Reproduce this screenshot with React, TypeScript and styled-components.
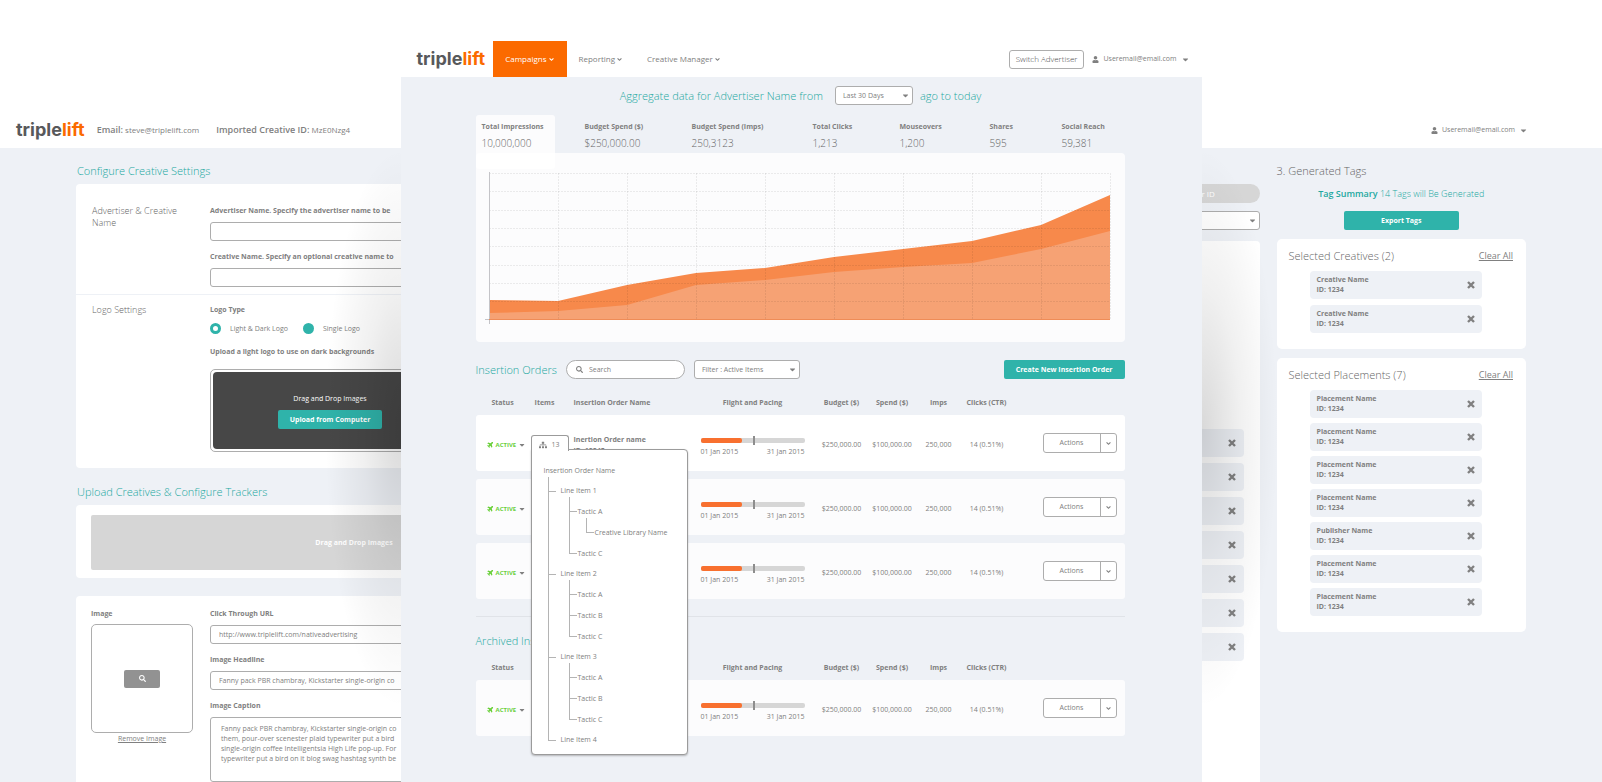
import React from "react";
import styled, { createGlobalStyle, css } from "styled-components";
import { FaAngleDown, FaCaretDown, FaPlane, FaSearch, FaSitemap, FaUser } from "react-icons/fa";

const color = {
  page: "#eef1f6",
  text: "#808080",
  soft: "#666",
  line: "#adadad",
  teal: "#2fb3aa",
  heading: "#22a89f",
  orange: "#fb6a00",
  green: "#6bd03c",
  grey: "#d6d6d6",
};

const GlobalStyle = createGlobalStyle`
  *, *::before, *::after { box-sizing: border-box; }
  body {
    margin: 0;
    background: ${color.page};
    color: ${color.text};
    font: 400 7px/10px "Open Sans", "Noto Sans", sans-serif;
  }
  button, input, select, textarea { font: inherit; color: inherit; margin: 0; }
  button { cursor: pointer; }
  h1, h2, h3, p, ul { margin: 0; padding: 0; }
  ul { list-style: none; }
  a { color: inherit; }
  svg { display: block; flex: none; }
`;

/* ---------- shared pieces ---------- */

const Stage = styled.div`
  display: grid;
  grid-template-columns: minmax(0, 1fr) minmax(0, 2fr) minmax(0, 1fr);
  height: 100vh;
  overflow: hidden;
`;

const Screen = styled.section<{ $shade?: "left" | "right" }>`
  position: relative;
  overflow: hidden;
  background: ${color.page};
  ${({ $shade }) =>
    $shade &&
    css`
      &::after {
        content: "";
        position: absolute;
        top: 148px;
        bottom: 0;
        ${$shade}: 0;
        width: 80px;
        pointer-events: none;
        background: radial-gradient(
          ellipse 76px 280px at ${$shade === "right" ? "100%" : "0%"} 280px,
          rgba(0, 0, 0, 0.15),
          rgba(0, 0, 0, 0.06) 50%,
          transparent
        );
      }
    `}
`;

const SideHeader = styled.header`
  display: flex;
  align-items: center;
  height: 148px;
  padding: 112px 16px 0;
  background: #fff;
`;

const LogoLink = styled.a`
  color: #58595b;
  font: 700 18px/22px Inter, "Open Sans", sans-serif;
  text-decoration: none;
  span { color: ${color.orange}; }
`;

const Logo = () => (
  <LogoLink href="#home">
    triple<span>lift</span>
  </LogoLink>
);

const Heading = styled.h2<{ $grey?: boolean }>`
  color: ${({ $grey }) => ($grey ? color.soft : color.heading)};
  font-size: 11px;
  font-weight: 300;
  line-height: 19px;
  white-space: nowrap;
`;

const PrimaryButton = styled.button`
  height: 19px;
  padding: 0 12px;
  border: 0;
  border-radius: 2px;
  background: ${color.teal};
  color: #fff;
  font-weight: 700;
  white-space: nowrap;
`;

const OutlineButton = styled.button`
  height: 19px;
  padding: 0 6px;
  border: 1px solid ${color.line};
  border-radius: 3px;
  background: #fff;
  font-size: 8px;
  font-weight: 300;
  color: #4c4c4c;
`;

const UserButton = styled.button`
  display: flex;
  align-items: center;
  gap: 4px;
  padding: 0;
  border: 0;
  background: none;
`;

const UserMenu = () => (
  <UserButton>
    <FaUser size={7} />
    Useremail@email.com
    <FaCaretDown size={9} />
  </UserButton>
);

const SelectBox = styled.span`
  position: relative;
  display: block;
  svg { position: absolute; right: 3px; top: 5px; pointer-events: none; }
`;

const SelectField = styled.select`
  display: block;
  width: 100%;
  height: 19px;
  padding: 0 20px 0 7px;
  border: 1px solid ${color.line};
  border-radius: 3px;
  background: #fff;
  appearance: none;
`;

const Select = ({ label, value, className }: { label: string; value: string; className?: string }) => (
  <SelectBox className={className}>
    <SelectField aria-label={label}>
      <option>{value}</option>
    </SelectField>
    <FaCaretDown size={9} />
  </SelectBox>
);

/* ---------- creative settings screen ---------- */

const HeaderFact = styled.p`
  margin-left: 12px;
  font-size: 8px;
  white-space: nowrap;
  & + & { margin-left: 17px; }
  b { font-size: 9px; font-weight: 600; }
`;

const SettingsBody = styled.div`
  width: 632px;
  padding: 13px 0 0 76px;
  ${Heading} { padding-left: 1px; }
`;

const SettingsCard = styled.div<{ $bottom: number }>`
  margin: 4px 0 ${({ $bottom }) => $bottom}px;
  border-radius: 4px;
  background: #fff;
`;

const SettingsGroup = styled.div<{ $top: number; $bottom: number }>`
  display: grid;
  grid-template-columns: 119px 1fr;
  padding: ${({ $top, $bottom }) => `${$top}px 15px ${$bottom}px`};
  & + & { border-top: 1px solid ${color.page}; }
`;

const GroupTitle = styled.h3`
  width: 96px;
  padding-left: 1px;
  font-size: 9px;
  font-weight: 300;
  line-height: 12px;
  color: ${color.soft};
`;

const Fields = styled.div`
  display: flex;
  flex-direction: column;
  gap: 10px;
`;

const Field = styled.label`
  display: flex;
  flex-direction: column;
  gap: 6px;
  font-weight: 700;
  line-height: 11px;
  white-space: nowrap;
`;

const inputLook = css`
  width: 100%;
  border: 1px solid ${color.line};
  border-radius: 3px;
  background: #fff;
  font-weight: 400;
`;

const TextInput = styled.input`
  ${inputLook}
  height: 19px;
  padding: 0 8px;
`;

const TextArea = styled.textarea`
  ${inputLook}
  height: 65px;
  padding: 6px 10px;
  line-height: 10px;
  resize: none;
`;

const LogoOptions = styled.div`
  font-weight: 700;
  line-height: 11px;
`;

const RadioRow = styled.div`
  display: flex;
  gap: 15px;
  margin: 8px 0 12px;
  label {
    display: flex;
    align-items: center;
    gap: 9px;
    font-weight: 400;
  }
`;

const Radio = styled.input`
  width: 11px;
  height: 11px;
  margin: 0;
  border-radius: 50%;
  background: ${color.teal};
  appearance: none;
  &:checked { border: 3px solid ${color.teal}; background: #fff; }
`;

const LogoDrop = styled.div`
  width: 240px;
  height: 83px;
  margin-top: 12px;
  padding: 2px;
  border: 1px solid ${color.line};
  border-radius: 5px;
`;

const LogoDropArea = styled.div`
  display: flex;
  flex-direction: column;
  align-items: center;
  justify-content: center;
  gap: 6px;
  height: 100%;
  border-radius: 4px;
  background: #474747;
  color: #fff;
  font-weight: 400;
`;

const DropStrip = styled.div`
  display: flex;
  align-items: center;
  justify-content: center;
  height: 55px;
  border-radius: 2px;
  background: ${color.grey};
  color: #fff;
  font-weight: 700;
`;

const StripWrap = styled.div`
  padding: 10px 15px 8px;
`;

const ImageColumn = styled.div`
  width: 102px;
  font-weight: 700;
  line-height: 11px;
  a {
    display: block;
    font-weight: 400;
    text-align: center;
  }
`;

const Thumbnail = styled.div`
  display: grid;
  place-items: center;
  height: 109px;
  margin-top: 5px;
  border: 1px solid ${color.line};
  border-radius: 5px;
`;

const ThumbButton = styled.button`
  display: grid;
  place-items: center;
  width: 36px;
  height: 18px;
  padding: 0;
  border: 0;
  border-radius: 2px;
  background: #929292;
  color: #fff;
`;

const caption = `Fanny pack PBR chambray, Kickstarter single-origin co
them, pour-over scenester plaid typewriter put a bird
single-origin coffee Intelligentsia High Life pop-up. For
typewriter put a bird on it blog swag hashtag synth be`;

const SettingsScreen = () => (
  <Screen $shade="right">
    <SideHeader>
      <Logo />
      <HeaderFact>
        <b>Email:</b> steve@triplelift.com
      </HeaderFact>
      <HeaderFact>
        <b>Imported Creative ID:</b> MzE0Nzg4
      </HeaderFact>
    </SideHeader>
    <SettingsBody>
      <Heading>Configure Creative Settings</Heading>
      <SettingsCard $bottom={14}>
        <SettingsGroup $top={21} $bottom={7}>
          <GroupTitle>Advertiser &amp; Creative Name</GroupTitle>
          <Fields>
            <Field>
              Advertiser Name. Specify the advertiser name to be
              <TextInput />
            </Field>
            <Field>
              Creative Name. Specify an optional creative name to
              <TextInput />
            </Field>
          </Fields>
        </SettingsGroup>
        <SettingsGroup $top={9} $bottom={16}>
          <GroupTitle>Logo Settings</GroupTitle>
          <LogoOptions>
            Logo Type
            <RadioRow>
              <label>
                <Radio type="radio" name="logo" defaultChecked />
                Light &amp; Dark Logo
              </label>
              <label>
                <Radio type="radio" name="logo" />
                Single Logo
              </label>
            </RadioRow>
            Upload a light logo to use on dark backgrounds
            <LogoDrop>
              <LogoDropArea>
                Drag and Drop Images
                <PrimaryButton>Upload from Computer</PrimaryButton>
              </LogoDropArea>
            </LogoDrop>
          </LogoOptions>
        </SettingsGroup>
      </SettingsCard>
      <Heading>Upload Creatives &amp; Configure Trackers</Heading>
      <SettingsCard $bottom={18}>
        <StripWrap>
          <DropStrip>Drag and Drop Images</DropStrip>
        </StripWrap>
      </SettingsCard>
      <SettingsCard $bottom={0}>
        <SettingsGroup $top={12} $bottom={16}>
          <ImageColumn>
            Image
            <Thumbnail>
              <ThumbButton aria-label="Preview image">
                <FaSearch size={7} />
              </ThumbButton>
            </Thumbnail>
            <a href="#remove">Remove Image</a>
          </ImageColumn>
          <Fields>
            <Field>
              Click Through URL
              <TextInput defaultValue="http://www.triplelift.com/nativeadvertising" />
            </Field>
            <Field>
              Image Headline
              <TextInput defaultValue="Fanny pack PBR chambray, Kickstarter single-origin co" />
            </Field>
            <Field>
              Image Caption
              <TextArea defaultValue={caption} />
            </Field>
          </Fields>
        </SettingsGroup>
      </SettingsCard>
    </SettingsBody>
  </Screen>
);

/* ---------- campaigns screen ---------- */

const CampaignHeader = styled.header`
  display: flex;
  align-items: center;
  gap: 8px;
  height: 77px;
  padding: 41px 12px 0 16px;
  background: #fff;
`;

const Nav = styled.nav`
  display: flex;
  align-self: stretch;
  flex: 1;
`;

const NavLink = styled.a<{ $active?: boolean }>`
  display: flex;
  align-items: center;
  gap: 1px;
  padding: 0 12px;
  background: ${({ $active }) => ($active ? color.orange : "transparent")};
  color: ${({ $active }) => ($active ? "#fff" : color.text)};
  font-size: 8px;
  text-decoration: none;
  white-space: nowrap;
`;

const CampaignBody = styled.div`
  padding: 9px 77px 0 75px;
`;

const RangeRow = styled.div`
  display: flex;
  justify-content: center;
  gap: 7px;
  padding-left: 1px;
`;

const RangeSelect = styled(Select)`
  width: 78px;
  margin-left: 5px;
`;

const Stats = styled.div`
  position: relative;
  z-index: 1;
  display: grid;
  grid-template-columns:
    minmax(0, 103fr) minmax(0, 107fr) minmax(0, 121fr) minmax(0, 87fr)
    minmax(0, 90fr) minmax(0, 72fr) minmax(0, 69fr);
  align-items: start;
  height: 38px;
  margin-top: 10px;
`;

const Stat = styled.button<{ $active?: boolean }>`
  display: flex;
  flex-direction: column;
  gap: 4px;
  width: 79px;
  height: 54px;
  padding: 7px 6px 0;
  border: 0;
  border-radius: 3px;
  background: ${({ $active }) => ($active ? "rgba(255, 255, 255, 0.8)" : "transparent")};
  text-align: left;
  white-space: nowrap;
  b { line-height: 10px; }
  span { font-size: 10px; font-weight: 300; line-height: 14px; color: ${color.soft}; }
`;

const ChartCard = styled.div`
  height: 189px;
  border-radius: 4px;
  background: rgba(255, 255, 255, 0.8);
  svg { width: 100%; height: 100%; }
`;

const stats: [string, string][] = [
  ["Total Impressions", "10,000,000"],
  ["Budget Spend ($)", "$250,000.00"],
  ["Budget Spend (Imps)", "250,3123"],
  ["Total Clicks", "1,213"],
  ["Mouseovers", "1,200"],
  ["Shares", "595"],
  ["Social Reach", "59,381"],
];

const totalSeries = [147, 148, 132, 120, 115, 104, 96, 88, 72, 42];
const spentSeries = [160, 158, 152, 132, 127, 119, 114, 110, 96, 78];
const gridRows = [20, 38, 57, 75, 93, 112, 130, 148];
const chartX = (i: number) => 13 + i * 69;
const area = (ys: number[]) =>
  `M13 167 ${ys.map((y, i) => `L${chartX(i)} ${y}`).join(" ")} L${chartX(9)} 167Z`;

const Chart = () => (
  <svg viewBox="0 0 649 189" preserveAspectRatio="none" role="img" aria-label="Impressions over time">
    <path d={area(totalSeries)} fill="#f7894b" />
    <path d={area(spentSeries)} fill="#f6a274" />
    <g stroke="#000" strokeOpacity="0.07" strokeDasharray="2 1" shapeRendering="crispEdges">
      {gridRows.map((y) => (
        <line key={y} x1="13" x2="634" y1={y + 0.5} y2={y + 0.5} />
      ))}
      {totalSeries.map((_, i) => (
        <line key={i} x1={chartX(i) + 0.5} x2={chartX(i) + 0.5} y1="20" y2="167" />
      ))}
    </g>
    <path d="M13.5 19V171M9 166.5H13" stroke="#c4c4c8" fill="none" />
    <path d="M13 166.5H634" stroke="#ef8c57" fill="none" />
  </svg>
);

const Toolbar = styled.div`
  display: flex;
  align-items: center;
  gap: 9px;
  margin: 18px 0 12px;
  ${PrimaryButton} { margin-left: auto; }
`;

const SearchBox = styled.label`
  display: flex;
  align-items: center;
  gap: 6px;
  width: 119px;
  height: 19px;
  padding: 0 9px;
  border: 1px solid ${color.line};
  border-radius: 10px;
  background: #fff;
  input {
    flex: 1;
    min-width: 0;
    padding: 0;
    border: 0;
    outline: 0;
    background: none;
  }
  input::placeholder { color: inherit; opacity: 1; }
`;

const FilterSelect = styled(Select)`
  width: 106px;
`;

const OrderTable = styled.table`
  width: 100%;
  border-spacing: 0 8px;
  table-layout: fixed;
  white-space: nowrap;
  th { padding: 0; line-height: 8px; text-align: center; }
  td {
    height: 56px;
    padding: 3px 0 0;
    background: rgba(255, 255, 255, 0.8);
    text-align: center;
  }
  td:first-child { padding-left: 11px; border-radius: 3px 0 0 3px; }
  td:last-child { padding: 0 8px 0 0; border-radius: 0 3px 3px 0; }
  .name { padding-left: 14px; text-align: left; }
  td.name { line-height: 11px; }
  td.flight { padding-top: 6px; }
  .budget { padding-left: 12px; }
  tr.current td { background: #fff; }
`;

const Col = styled.col<{ $w?: number }>`
  width: ${({ $w }) => ($w ? `${$w}px` : "auto")};
`;

const StatusButton = styled.button`
  display: flex;
  align-items: center;
  gap: 2px;
  padding: 0;
  border: 0;
  background: none;
  color: ${color.green};
  font-size: 6px;
  font-weight: 700;
  svg:first-child { transform: rotate(-45deg); }
  svg:last-child { color: ${color.text}; }
`;

const Pacing = styled.div`
  position: relative;
  height: 5px;
  margin: 2px 0;
  border-radius: 2px;
  background: ${color.grey};
  &::before {
    content: "";
    display: block;
    width: 40%;
    height: 100%;
    border-radius: 2px;
    background: #f8702f;
  }
  &::after {
    content: "";
    position: absolute;
    left: 50%;
    top: -2px;
    width: 2px;
    height: 9px;
    background: #8d8d8d;
  }
`;

const Dates = styled.div`
  display: flex;
  justify-content: space-between;
  margin-top: 4px;
`;

const ActionGroup = styled.div`
  display: flex;
  width: 74px;
  margin-left: auto;
  border: 1px solid ${color.line};
  border-radius: 3px;
  background: #fff;
`;

const ActionButton = styled.button`
  display: grid;
  place-items: center;
  flex: 1;
  height: 18px;
  padding: 0;
  border: 0;
  background: none;
  & + & {
    flex: 0 0 16px;
    border-left: 1px solid ${color.line};
  }
`;

const Divider = styled.hr`
  margin: 9px 0 14px;
  border: 0;
  border-top: 1px solid #e0e3e8;
`;

const ArchivedTable = styled(OrderTable)`
  margin-top: 6px;
`;

const ItemsCell = styled.td`
  position: relative;
`;

const ItemsMenu = styled.div`
  position: absolute;
  z-index: 2;
  top: 20px;
  left: 1px;
  text-align: left;
`;

const ItemsTab = styled.button`
  position: relative;
  z-index: 1;
  display: flex;
  align-items: center;
  justify-content: center;
  gap: 4px;
  width: 38px;
  height: 16px;
  margin-bottom: -2px;
  padding: 2px 0 0;
  border: 1px solid #9b9b9b;
  border-bottom: 0;
  border-radius: 3px 3px 0 0;
  background: #fff;
`;

const TreePanel = styled.div`
  width: 157px;
  padding: 10px 0 4px 12px;
  border: 1px solid #9b9b9b;
  border-radius: 0 4px 4px 4px;
  background: #fff;
  box-shadow: 0 1px 2px rgba(0, 0, 0, 0.25);
  line-height: 21px;
`;

const Branch = styled.ul<{ $level: number }>`
  margin-left: ${({ $level }) => ($level === 1 ? 4 : 8)}px;
  > li {
    position: relative;
    padding-left: ${({ $level }) => ($level === 1 ? 13 : 9)}px;
  }
  > li > span { display: block; line-height: ${({ $level }) => ($level === 1 ? 20 : 21)}px; }
  > li::before {
    content: "";
    position: absolute;
    left: 0;
    top: -4px;
    width: 8px;
    height: 15px;
    border: solid #b4b4b4;
    border-width: 0 0 1px 1px;
  }
  > li:not(:last-child)::after {
    content: "";
    position: absolute;
    left: 0;
    top: 0;
    bottom: 0;
    border-left: 1px solid #b4b4b4;
  }
`;

type Node = { name: string; children?: Node[] };

const tactics = ["Tactic A", "Tactic B", "Tactic C"].map((name) => ({ name }));
const lineItems: Node[] = [
  {
    name: "Line Item 1",
    children: [{ name: "Tactic A", children: [{ name: "Creative Library Name" }] }, { name: "Tactic C" }],
  },
  { name: "Line Item 2", children: tactics },
  { name: "Line Item 3", children: tactics },
  { name: "Line Item 4" },
];

const Tree = ({ nodes, level }: { nodes: Node[]; level: number }) => (
  <Branch $level={level}>
    {nodes.map((node) => (
      <li key={node.name}>
        <span>{node.name}</span>
        {node.children && <Tree nodes={node.children} level={level + 1} />}
      </li>
    ))}
  </Branch>
);

const Columns = () => (
  <colgroup>
    {[54, 30, undefined, 104, 62, 51, 42, 54, 111].map((w, i) => (
      <Col key={i} $w={w} />
    ))}
  </colgroup>
);

const TableHead = () => (
  <thead>
    <tr>
      <th>Status</th>
      <th>Items</th>
      <th className="name">Insertion Order Name</th>
      <th>Flight and Pacing</th>
      <th className="budget">Budget ($)</th>
      <th>Spend ($)</th>
      <th>Imps</th>
      <th>Clicks (CTR)</th>
      <th aria-label="Actions" />
    </tr>
  </thead>
);

const OrderRow = ({ open }: { open?: boolean }) => (
  <tr className={open ? "current" : undefined}>
    <td>
      <StatusButton>
        <FaPlane size={7} />
        ACTIVE
        <FaCaretDown size={8} />
      </StatusButton>
    </td>
    <ItemsCell>
      {open && (
        <ItemsMenu>
          <ItemsTab aria-expanded="true">
            <FaSitemap size={8} />
            13
          </ItemsTab>
          <TreePanel>
            Insertion Order Name
            <Tree nodes={lineItems} level={1} />
          </TreePanel>
        </ItemsMenu>
      )}
    </ItemsCell>
    <td className="name">
      {open && (
        <b>
          Inertion Order name
          <br />
          ID: 12345
        </b>
      )}
    </td>
    <td className="flight">
      <Pacing />
      <Dates>
        <span>01 Jan 2015</span>
        <span>31 Jan 2015</span>
      </Dates>
    </td>
    <td className="budget">$250,000.00</td>
    <td>$100,000.00</td>
    <td>250,000</td>
    <td>14 (0.51%)</td>
    <td>
      <ActionGroup>
        <ActionButton>Actions</ActionButton>
        <ActionButton aria-label="More actions">
          <FaAngleDown size={7} />
        </ActionButton>
      </ActionGroup>
    </td>
  </tr>
);

const CampaignScreen = () => (
  <Screen>
    <CampaignHeader>
      <Logo />
      <Nav>
        {["Campaigns", "Reporting", "Creative Manager"].map((name, i) => (
          <NavLink key={name} href="#nav" $active={i === 0}>
            {name}
            <FaAngleDown size={7} />
          </NavLink>
        ))}
      </Nav>
      <OutlineButton>Switch Advertiser</OutlineButton>
      <UserMenu />
    </CampaignHeader>
    <CampaignBody>
      <RangeRow>
        <Heading>Aggregate data for Advertiser Name from</Heading>
        <RangeSelect label="Date range" value="Last 30 Days" />
        <Heading as="span">ago to today</Heading>
      </RangeRow>
      <Stats>
        {stats.map(([name, value], i) => (
          <Stat key={name} $active={i === 0}>
            <b>{name}</b>
            <span>{value}</span>
          </Stat>
        ))}
      </Stats>
      <ChartCard>
        <Chart />
      </ChartCard>
      <Toolbar>
        <Heading>Insertion Orders</Heading>
        <SearchBox>
          <FaSearch size={7} />
          <input placeholder="Search" aria-label="Search" />
        </SearchBox>
        <FilterSelect label="Filter" value="Filter : Active Items" />
        <PrimaryButton>Create New Insertion Order</PrimaryButton>
      </Toolbar>
      <OrderTable>
        <Columns />
        <TableHead />
        <tbody>
          <OrderRow open />
          <OrderRow />
          <OrderRow />
        </tbody>
      </OrderTable>
      <Divider />
      <Heading>Archived Insertion Orders</Heading>
      <ArchivedTable>
        <Columns />
        <TableHead />
        <tbody>
          <OrderRow />
        </tbody>
      </ArchivedTable>
    </CampaignBody>
  </Screen>
);

/* ---------- tag generation screen ---------- */

const TagHeader = styled(SideHeader)`
  justify-content: flex-end;
  padding-right: 74px;
`;

const TagBody = styled.div`
  display: grid;
  grid-template-columns: 58px minmax(0, 1fr);
  gap: 17px;
  padding: 13px 76px 0 0;
`;

const SourceColumn = styled.div`
  margin-left: -30px;
  padding-top: 23px;
`;

const IdPill = styled.button`
  display: block;
  width: 100%;
  height: 19px;
  padding: 0 0 0 30px;
  border: 0;
  border-radius: 10px;
  background: ${color.grey};
  color: #fff;
  font-size: 8px;
  text-align: left;
  white-space: nowrap;
`;

const SourceSelect = styled(Select)`
  margin: 8px 0 11px;
`;

const SourceList = styled.ul`
  display: flex;
  flex-direction: column;
  gap: 6px;
  height: 560px;
  padding: 188px 16px 0 0;
  border-radius: 4px;
  background: #fff;
`;

const TagItem = styled.li`
  display: flex;
  align-items: center;
  justify-content: space-between;
  height: 28px;
  padding: 0 7px;
  border-radius: 4px;
  background: ${color.page};
  font-weight: 700;
`;

const SourceItem = styled(TagItem)`
  justify-content: flex-end;
  padding-right: 8px;
`;

const RemoveButton = styled.button`
  padding: 0;
  border: 0;
  background: none;
`;

const Remove = () => (
  <RemoveButton aria-label="Remove">
    <svg width="8" height="8" viewBox="0 0 8 8" stroke="currentColor" strokeWidth="2.4">
      <path d="M1 1L7 7M7 1L1 7" />
    </svg>
  </RemoveButton>
);

const Summary = styled.p`
  margin: 9px 0 12px;
  color: ${color.heading};
  font-size: 9px;
  font-weight: 300;
  text-align: center;
  b { font-weight: 600; }
`;

const ExportButton = styled(PrimaryButton)`
  display: block;
  width: 115px;
  margin: 0 auto;
`;

const TagCard = styled.section`
  margin-top: 9px;
  padding: 7px 13px 16px 12px;
  border-radius: 5px;
  background: #fff;
  & + & { margin-top: 9px; }
`;

const TagCardHead = styled.div`
  display: flex;
  align-items: center;
  justify-content: space-between;
  a { font-size: 9px; }
`;

const TagList = styled.ul<{ $gap: number }>`
  display: flex;
  flex-direction: column;
  gap: ${({ $gap }) => $gap}px;
  margin: 6px 31px 0 21px;
`;

const placements = ["Placement", "Placement", "Placement", "Placement", "Publisher", "Placement", "Placement"];

const TagGroup = ({ title, names, gap }: { title: string; names: string[]; gap: number }) => (
  <TagCard>
    <TagCardHead>
      <Heading $grey>
        {title} ({names.length})
      </Heading>
      <a href="#clear">Clear All</a>
    </TagCardHead>
    <TagList $gap={gap}>
      {names.map((name, i) => (
        <TagItem key={i}>
          <span>
            {name} Name
            <br />
            ID: 1234
          </span>
          <Remove />
        </TagItem>
      ))}
    </TagList>
  </TagCard>
);

const TagScreen = () => (
  <Screen $shade="left">
    <TagHeader>
      <UserMenu />
    </TagHeader>
    <TagBody>
      <SourceColumn>
        <IdPill>r ID</IdPill>
        <SourceSelect label="Source" value="" />
        <SourceList>
          {placements.map((_, i) => (
            <SourceItem key={i}>
              <Remove />
            </SourceItem>
          ))}
        </SourceList>
      </SourceColumn>
      <div>
        <Heading $grey>3. Generated Tags</Heading>
        <Summary>
          <b>Tag Summary</b> 14 Tags will Be Generated
        </Summary>
        <ExportButton>Export Tags</ExportButton>
        <TagGroup title="Selected Creatives" names={["Creative", "Creative"]} gap={6} />
        <TagGroup title="Selected Placements" names={placements} gap={5} />
      </div>
    </TagBody>
  </Screen>
);

export default function App() {
  return (
    <>
      <GlobalStyle />
      <Stage>
        <SettingsScreen />
        <CampaignScreen />
        <TagScreen />
      </Stage>
    </>
  );
}
